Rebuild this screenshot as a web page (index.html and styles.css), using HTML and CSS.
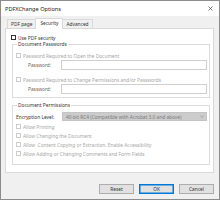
FILE: index.html
```html
<!DOCTYPE html>
<html>
<head>
<meta charset="utf-8">
<link rel="stylesheet" href="styles.css">
</head>
<body>
<div class="window">
  <div class="titlebar">
    <span class="title">PDFXChange Options</span>
    <svg class="close" width="5" height="5" viewBox="0 0 5 5"><path d="M0.5 0.5L4.5 4.5M4.5 0.5L0.5 4.5" stroke="#444" stroke-width="0.7"/></svg>
  </div>
  <div class="content">
    <div class="tabs">
      <div class="tab">PDF page</div>
      <div class="tab active">Security</div>
      <div class="tab">Advanced</div>
    </div>
    <div class="panel">
      <div class="check enabled"><span class="box"></span><span>Use PDF security</span></div>
      <fieldset class="group pw">
        <legend>Document Passwords</legend>
        <div class="check"><span class="box"></span><span>Password Required to Open the Document</span></div>
        <div class="field"><span class="label">Password:</span><span class="input"></span></div>
        <div class="check second"><span class="box"></span><span>Password Required to Change Permissions and/or Passwords</span></div>
        <div class="field"><span class="label">Password:</span><span class="input"></span></div>
      </fieldset>
      <fieldset class="group perms">
        <legend>Document Permissions</legend>
        <div class="field enc"><span class="label left">Encryption Level:</span><span class="select"><span>40-bit RC4 (Compatible with Acrobat 3.0 and above)</span><svg width="4" height="3" viewBox="0 0 4 3"><path d="M0.3 0.8L2 2.3L3.7 0.8" fill="none" stroke="#888" stroke-width="0.6"/></svg></span></div>
        <div class="check"><span class="box"></span><span>Allow Printing</span></div>
        <div class="check"><span class="box"></span><span>Allow Changing the Document</span></div>
        <div class="check"><span class="box"></span><span>Allow&nbsp; Content Copying or Extraction. Enable Accessibility</span></div>
        <div class="check"><span class="box"></span><span>Allow Adding or Changing Comments and Form Fields</span></div>
      </fieldset>
    </div>
    <div class="buttons">
      <div class="btn">Reset</div>
      <div class="btn default">OK</div>
      <div class="btn">Cancel</div>
    </div>
  </div>
</div>
</body>
</html>
```
FILE: styles.css
```css
* { box-sizing: border-box; }
html, body { margin: 0; padding: 0; background: #ffffff; }
body { font-family: "Noto Sans", "Open Sans", sans-serif; font-size: 4.8px; color: #333; }
.window {
  width: 220px; height: 200px;
  border: 1px solid #8c8c8c;
  background: #f0f0f0;
  display: flex; flex-direction: column;
}
.titlebar {
  height: 15px; background: #fff;
  display: flex; align-items: center; justify-content: space-between;
  padding: 0 6px 0 4px;
}
.title { font-size: 5.6px; color: #222; }
.content {
  flex: 1; display: flex; flex-direction: column;
  padding: 2px 5px 5px 4px;
}
.tabs { display: flex; align-items: flex-end; height: 10px; padding-left: 2px; }
.tab {
  height: 9px; line-height: 8px; padding: 0 3px;
  border: 1px solid #d9d9d9; border-bottom: none;
  background: #f0f0f0; color: #333;
}
.tab.active {
  height: 11px; line-height: 9px; background: #fff;
  margin-bottom: -1px; margin-left: -1px; margin-right: -1px;
  position: relative; z-index: 1; padding: 0 4px;
}
.panel {
  height: 145px; background: #fff; border: 1px solid #d9d9d9;
  padding: 6px 3px 0 5px;
  display: flex; flex-direction: column;
}
.check { display: flex; align-items: center; gap: 2px; height: 7px; color: #a6a6a6; }
.check .box { width: 5px; height: 5px; border: 1px solid #cccccc; background: #fff; flex: none; }
.check.enabled { color: #333; height: 5px; }
.check.enabled .box { border-color: #333; }
.group {
  margin: 1px 0 0 1px; padding: 4px 2px 3px 3px;
  border: 1px solid #dcdcdc;
  display: flex; flex-direction: column;
}
.group legend { padding: 0 1px; margin-left: 1px; line-height: 7px; color: #333; }
.group.pw .field { margin-top: 1px; }
.group.pw .check.second { margin-top: 6px; }
.group.perms { margin-top: 4px; padding-top: 3px; padding-bottom: 7px; gap: 2px; }
.field { display: grid; grid-template-columns: 35px 1fr; column-gap: 10px; align-items: center; }
.label { text-align: right; color: #666; white-space: nowrap; }
.label.left { text-align: left; color: #333; }
.input { height: 10px; border: 1px solid #cfcfcf; background: #fff; }
.field.enc { column-gap: 11px; margin-bottom: 0; }
.select {
  height: 9px; background: #cccccc; border: 1px solid #c4c4c4;
  display: flex; align-items: center; justify-content: space-between;
  padding: 0 2px 0 3px; color: #7a7a7a; white-space: nowrap;
}
.buttons { display: flex; justify-content: flex-end; gap: 5px; margin-top: 11px; padding-right: 0; }
.btn {
  width: 35px; height: 10px; line-height: 8px; text-align: center;
  background: #e1e1e1; border: 1px solid #adadad; color: #333;
}
.btn.default { border-color: #0078d7; box-shadow: inset 0 0 0 0.5px #0078d7; }
```
